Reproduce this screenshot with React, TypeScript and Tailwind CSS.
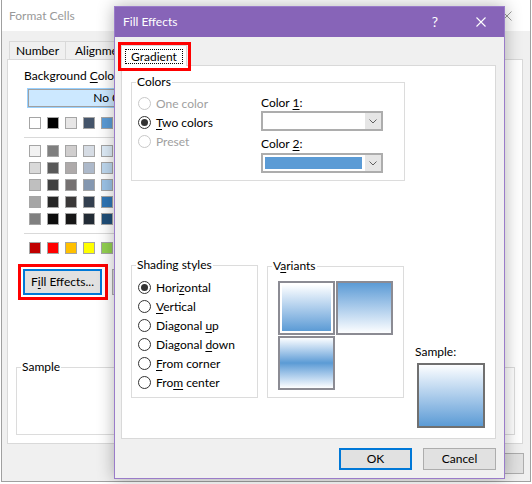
import React from "react";

function U({ text, i }: { text: string; i: number }) {
  if (i < 0) return <>{text}</>;
  return (
    <>
      {text.slice(0, i)}
      <span className="underline decoration-1 underline-offset-[2px]">{text[i]}</span>
      {text.slice(i + 1)}
    </>
  );
}

function Radio({
  label,
  u = -1,
  checked = false,
  disabled = false,
}: {
  label: string;
  u?: number;
  checked?: boolean;
  disabled?: boolean;
}) {
  return (
    <div className="flex h-[19px] items-center gap-[5px]">
      <span
        className={`flex h-[13px] w-[13px] items-center justify-center rounded-full border bg-white ${
          disabled ? "border-[#c8c8c8]" : "border-[#333333]"
        }`}
      >
        {checked && <span className="h-[7px] w-[7px] rounded-full bg-[#333333]" />}
      </span>
      <span className={disabled ? "text-[#a0a0a0]" : "text-black"}>
        <U text={label} i={u} />
      </span>
    </div>
  );
}

function Combo({ fill = false }: { fill?: boolean }) {
  return (
    <div className="flex h-[20px] w-[122px] border-2 border-[#adadad] bg-white">
      <div className="flex flex-1 items-stretch p-[2px] pr-[3px]">
        {fill && <div className="flex-1 bg-[#5b9bd5]" />}
      </div>
      <div className="flex w-[16px] items-center justify-center bg-[#e6e6e6]">
        <svg width="8" height="5" viewBox="0 0 8 5">
          <path d="M0.5 0.5 L4 4 L7.5 0.5" fill="none" stroke="#606060" strokeWidth="1" />
        </svg>
      </div>
    </div>
  );
}

const themeRow = ["bg-[#ffffff]", "bg-[#000000]", "bg-[#e7e6e6]", "bg-[#44546a]", "bg-[#5b9bd5]", "bg-[#ed7d31]"];
const tintRows = [
  ["bg-[#f2f2f2]", "bg-[#7f7f7f]", "bg-[#d0cece]", "bg-[#d6dce4]", "bg-[#ddebf7]", "bg-[#fce4d6]"],
  ["bg-[#d9d9d9]", "bg-[#595959]", "bg-[#aeaaaa]", "bg-[#adb9ca]", "bg-[#bdd7ee]", "bg-[#f8cbad]"],
  ["bg-[#bfbfbf]", "bg-[#404040]", "bg-[#757171]", "bg-[#8497b0]", "bg-[#9bc2e6]", "bg-[#f4b084]"],
  ["bg-[#a6a6a6]", "bg-[#262626]", "bg-[#3a3838]", "bg-[#333f4f]", "bg-[#2f75b5]", "bg-[#c65911]"],
  ["bg-[#808080]", "bg-[#0d0d0d]", "bg-[#171616]", "bg-[#222b35]", "bg-[#1f4e78]", "bg-[#833c0c]"],
];
const standardRow = ["bg-[#c00000]", "bg-[#ff0000]", "bg-[#ffc000]", "bg-[#ffff00]", "bg-[#92d050]", "bg-[#00b050]"];

function SwatchRow({ colors }: { colors: string[] }) {
  return (
    <div className="flex gap-[6px]">
      {colors.map((c, i) => (
        <div key={i} className={`h-[12px] w-[12px] border border-[#a5a5a5] ${c}`} />
      ))}
    </div>
  );
}

function FormatCells() {
  return (
    <div className="ml-[1px] flex h-[482px] w-[530px] flex-col border-x border-b border-[#a0a0a0] bg-[#f0f0f0]">
      <div className="flex h-[31px] items-center bg-white">
        <span className="pl-[7px] text-[#999999]">Format Cells</span>
        <span className="ml-auto flex w-[46px] justify-center">
          <svg width="10" height="10" viewBox="0 0 10 10">
            <path d="M0.5 0.5 L9.5 9.5 M9.5 0.5 L0.5 9.5" stroke="#999999" strokeWidth="1" />
          </svg>
        </span>
      </div>
      <div className="flex flex-1 flex-col pl-[5px] pr-[7px] pt-[10px]">
        <div className="flex h-[18px] pl-[2px]">
          <div className="flex w-[57px] items-center justify-center border-x border-t border-[#d9d9d9]">Number</div>
          <div className="flex w-[72px] items-center pl-[9px] border-r border-t border-[#d9d9d9]">Alignment</div>
          <div className="flex w-[40px] items-center pl-[8px] border-r border-t border-[#d9d9d9]">Font</div>
        </div>
        <div className="flex h-[385px] w-[516px] flex-col border border-[#d9d9d9] bg-white">
          <div className="pl-[16px] pt-[8px] leading-[16px]">
            Background <U text="Color:" i={0} />
          </div>
          <div className="ml-[19px] mt-[4px] h-[20px] w-[180px] border border-[#99d1ff] bg-[#cce8ff]">
            <div className="flex h-full items-center justify-center border border-[#a0a0a0]">No Color</div>
          </div>
          <div className="ml-[21px] mt-[9px]">
            <SwatchRow colors={themeRow} />
          </div>
          <div className="ml-[16px] mt-[8px] h-px w-[200px] bg-[#d9d9d9]" />
          <div className="ml-[21px] mt-[7px] flex flex-col gap-[5px]">
            {tintRows.map((r, i) => (
              <SwatchRow key={i} colors={r} />
            ))}
          </div>
          <div className="ml-[16px] mt-[8px] h-px w-[200px] bg-[#d9d9d9]" />
          <div className="ml-[21px] mt-[8px]">
            <SwatchRow colors={standardRow} />
          </div>
          <div className="ml-[15px] mt-[15px] flex gap-[10px]">
            <div className="relative">
              <div className="flex h-[26px] w-[79px] items-center justify-center border-2 border-[#0078d7] bg-[#e1e1e1]">
                <span>
                  F<U text="ill" i={0} /> Effects...
                </span>
              </div>
              <div className="absolute -left-[5px] -top-[5px] h-[36px] w-[90px] border-[3px] border-[#ff0000]" />
            </div>
            <div className="flex h-[26px] w-[90px] items-center justify-center border border-[#adadad] bg-[#e1e1e1]">
              More Colors...
            </div>
          </div>
          <fieldset className="mb-[8px] ml-[8px] mt-auto h-[76px] w-[499px] border border-[#dcdcdc]">
            <legend className="ml-[4px] px-[1px] leading-[16px]">Sample</legend>
          </fieldset>
        </div>
        <div className="-mr-px mt-[9px] flex justify-end gap-[11px]">
          <div className="flex h-[21px] w-[73px] items-center justify-center border border-[#adadad] bg-[#e1e1e1]">OK</div>
          <div className="flex h-[21px] w-[73px] items-center justify-center border border-[#adadad] bg-[#e1e1e1]">Cancel</div>
        </div>
      </div>
    </div>
  );
}

function FillEffects() {
  return (
    <div className="absolute left-[114px] top-[6px] flex h-[473px] w-[391px] flex-col border border-[#9a7cc9] bg-[#f0f0f0] shadow-[0_0_16px_rgba(0,0,0,0.3)]">
      <div className="flex h-[30px] items-center bg-[#8764b8] text-white">
        <span className="pl-[8px]">Fill Effects</span>
        <span className="ml-auto flex w-[46px] justify-center text-[14px]">?</span>
        <span className="flex w-[46px] justify-center">
          <svg width="10" height="10" viewBox="0 0 10 10">
            <path d="M0.5 0.5 L9.5 9.5 M9.5 0.5 L0.5 9.5" stroke="#ffffff" strokeWidth="1.1" />
          </svg>
        </span>
      </div>
      <div className="flex flex-1 flex-col pl-[6px] pt-[8px]">
        <div className="relative z-10 -mb-px flex h-[21px] w-[66px] items-center justify-center border-x border-t border-[#d9d9d9] bg-white">
          <span className="border border-dotted border-black px-[5px] leading-[13px]">Gradient</span>
          <div className="absolute -left-[4px] -top-[4px] h-[29px] w-[73px] border-[3px] border-[#ff0000]" />
        </div>
        <div className="flex h-[374px] w-[375px] border border-[#d9d9d9] bg-white pl-[9px] pt-[8px]">
          <div className="flex flex-col">
            <fieldset className="h-[107px] w-[274px] border border-[#dcdcdc]">
              <legend className="ml-[4px] px-[1px] leading-[16px]">Colors</legend>
              <div className="flex">
                <div className="w-[129px] pl-[6px] pt-[4px]">
                  <Radio label="One color" disabled />
                  <Radio label="Two colors" u={0} checked />
                  <Radio label="Preset" disabled />
                </div>
                <div className="flex flex-col pt-[5px]">
                  <div className="h-[16px] leading-[16px]">
                    <U text="Color 1:" i={6} />
                  </div>
                  <Combo />
                  <div className="mt-[5px] h-[16px] leading-[16px]">
                    <U text="Color 2:" i={6} />
                  </div>
                  <div className="mt-[1px]">
                    <Combo fill />
                  </div>
                </div>
              </div>
            </fieldset>
            <div className="mt-[76px] flex items-start gap-[9px]">
              <fieldset className="h-[141px] w-[127px] border border-[#dcdcdc]">
                <legend className="ml-[4px] px-[1px] leading-[16px]">Shading styles</legend>
                <div className="pl-[6px] pt-[5px]">
                  <Radio label="Horizontal" u={4} checked />
                  <Radio label="Vertical" u={0} />
                  <Radio label="Diagonal up" u={9} />
                  <Radio label="Diagonal down" u={9} />
                  <Radio label="From corner" u={0} />
                  <Radio label="From center" u={3} />
                </div>
              </fieldset>
              <fieldset className="mt-[1px] h-[140px] w-[137px] border border-[#dcdcdc]">
                <legend className="ml-[4px] px-[1px] leading-[16px]">
                  <U text="Variants" i={1} />
                </legend>
                <div className="grid grid-cols-[57px_57px] gap-[1px] pl-[10px] pt-[7px]">
                  <div className="h-[54px] border-2 border-[#8b8b93] bg-white p-[2px]">
                    <div className="h-full bg-linear-to-b from-[#fdfeff] to-[#5b9bd5]" />
                  </div>
                  <div className="h-[54px] border-2 border-[#8b8b93] bg-linear-to-b from-[#5b9bd5] to-[#fdfeff]" />
                  <div className="h-[54px] border-2 border-[#8b8b93] bg-linear-to-b from-[#fdfeff] via-[#5b9bd5] to-[#fdfeff]" />
                </div>
              </fieldset>
            </div>
          </div>
          <div className="ml-[10px] flex flex-col justify-end pb-[10px]">
            <div className="mb-[3px] leading-[16px]">Sample:</div>
            <div className="ml-[2px] h-[65px] w-[68px] border-2 border-[#707070] bg-linear-to-b from-[#fdfeff] to-[#5b9bd5]" />
          </div>
        </div>
        <div className="mt-[9px] flex justify-end gap-[11px] pr-[8px]">
          <div className="flex h-[22px] w-[73px] items-center justify-center border-2 border-[#0078d7] bg-[#e1e1e1]">OK</div>
          <div className="flex h-[22px] w-[73px] items-center justify-center border border-[#adadad] bg-[#e1e1e1]">Cancel</div>
        </div>
      </div>
    </div>
  );
}

export default function App() {
  return (
    <div className="relative h-[484px] w-[532px] overflow-hidden bg-white font-['Lato',sans-serif] text-[12px] leading-[16px] text-black">
      <FormatCells />
      <FillEffects />
    </div>
  );
}
